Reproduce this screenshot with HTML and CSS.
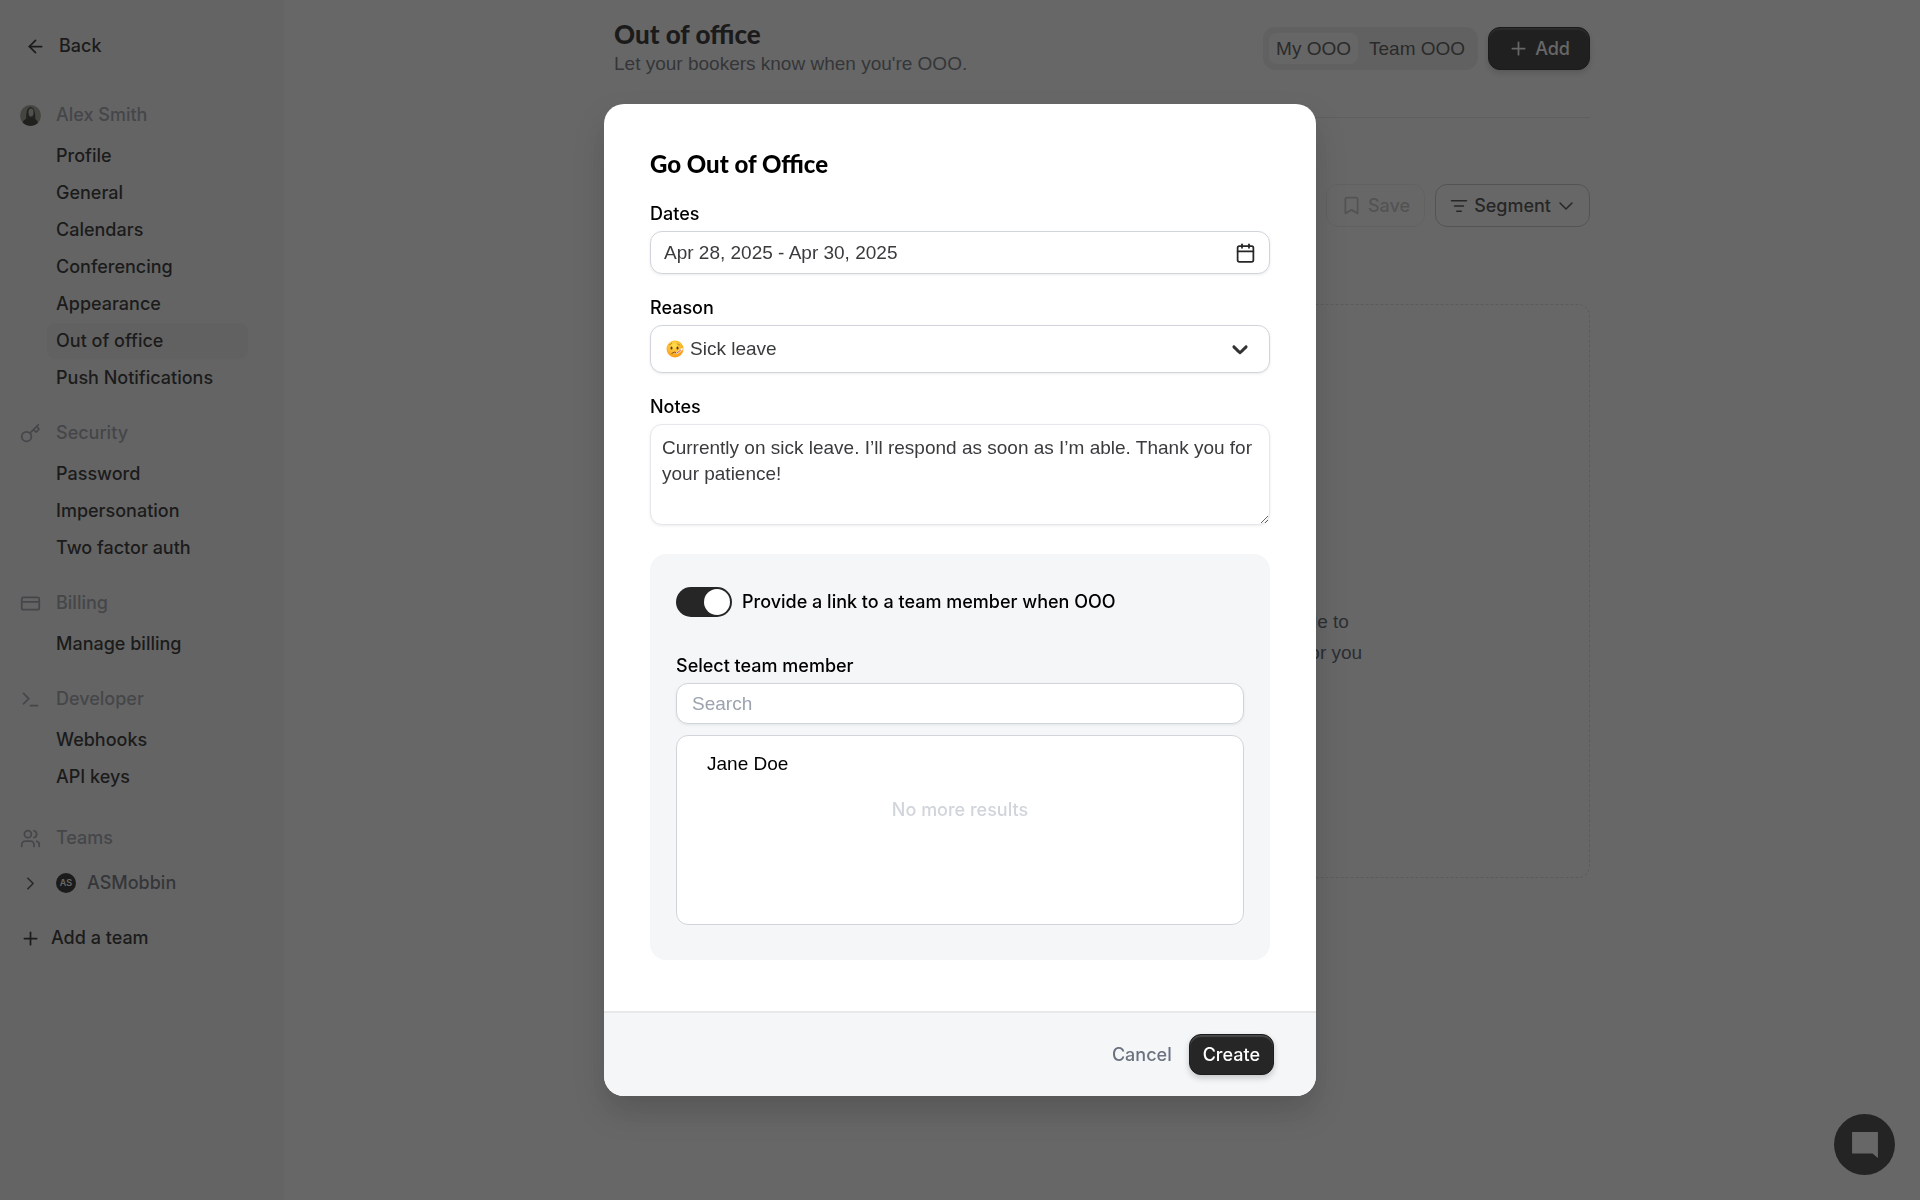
FILE: index.html
```html
<!DOCTYPE html>
<html lang="en">
<head>
    <meta charset="UTF-8">
    <meta name="viewport" content="width=device-width, initial-scale=1.0">
    <title>Out of office</title>
    <link rel="stylesheet" href="styles.css">
</head>
<body>
    <div class="app">
        <aside class="sidebar">
            <a href="#" class="back-link">
                <svg class="icon" viewBox="0 0 24 24"><path d="m12 19-7-7 7-7"/><path d="M19 12H5"/></svg>
                Back
            </a>

            <nav>
                <div class="nav-section">
                    <div class="nav-heading">
                        <svg class="avatar" viewBox="0 0 21 21">
                            <defs><clipPath id="avatarClip"><circle cx="10.5" cy="10.5" r="10.5"/></clipPath></defs>
                            <g clip-path="url(#avatarClip)">
                                <rect width="21" height="21" fill="#8d8d84"/>
                                <path d="M7 19C5 13 6 2 10.500 2S16 11 15 19Z" fill="#1c1c18"/>
                                <ellipse cx="11" cy="7.500" rx="2.500" ry="4" fill="#b9b5aa"/>
                                <path d="M2 21c0-6 4-8 8.500-8s8 2 8 8Z" fill="#12120f"/>
                            </g>
                        </svg>
                        Alex Smith
                    </div>
                    <ul class="nav-list">
                        <li><a href="#">Profile</a></li>
                        <li><a href="#">General</a></li>
                        <li><a href="#">Calendars</a></li>
                        <li><a href="#">Conferencing</a></li>
                        <li><a href="#">Appearance</a></li>
                        <li><a href="#" class="active">Out of office</a></li>
                        <li><a href="#">Push Notifications</a></li>
                    </ul>
                </div>

                <div class="nav-section">
                    <div class="nav-heading">
                        <svg class="icon" viewBox="0 0 24 24"><path d="m15.500 7.500 2.300 2.300a1 1 0 0 0 1.400 0l2.100-2.100a1 1 0 0 0 0-1.400L19 4"/><path d="m21 2-9.600 9.600"/><circle cx="7.500" cy="15.500" r="5.500"/></svg>
                        Security
                    </div>
                    <ul class="nav-list">
                        <li><a href="#">Password</a></li>
                        <li><a href="#">Impersonation</a></li>
                        <li><a href="#">Two factor auth</a></li>
                    </ul>
                </div>

                <div class="nav-section">
                    <div class="nav-heading">
                        <svg class="icon" viewBox="0 0 24 24"><rect x="2" y="5" width="20" height="14" rx="2"/><path d="M2 10h20"/></svg>
                        Billing
                    </div>
                    <ul class="nav-list">
                        <li><a href="#">Manage billing</a></li>
                    </ul>
                </div>

                <div class="nav-section">
                    <div class="nav-heading">
                        <svg class="icon" viewBox="0 0 24 24"><path d="m4 17 6-6-6-6"/><path d="M12 19h8"/></svg>
                        Developer
                    </div>
                    <ul class="nav-list">
                        <li><a href="#">Webhooks</a></li>
                        <li><a href="#">API keys</a></li>
                    </ul>
                </div>

                <div class="nav-section teams">
                    <div class="nav-heading">
                        <svg class="icon" viewBox="0 0 24 24"><path d="M16 21v-2a4 4 0 0 0-4-4H6a4 4 0 0 0-4 4v2"/><circle cx="9" cy="7" r="4"/><path d="M22 21v-2a4 4 0 0 0-3-3.870"/><path d="M16 3.130a4 4 0 0 1 0 7.750"/></svg>
                        Teams
                    </div>
                    <button type="button" class="team">
                        <svg class="icon" viewBox="0 0 24 24"><path d="m9 18 6-6-6-6"/></svg>
                        <span class="team-badge">AS</span>
                        ASMobbin
                    </button>
                </div>

                <a href="#" class="add-team">
                    <svg class="icon" viewBox="0 0 24 24"><path d="M5 12h14"/><path d="M12 5v14"/></svg>
                    Add a team
                </a>
            </nav>
        </aside>

        <main class="main">
            <div class="content">
                <header class="page-header">
                    <div class="page-title">
                        <h1>Out of office</h1>
                        <p>Let your bookers know when you're OOO.</p>
                    </div>
                    <div class="toggle-group">
                        <button type="button" class="selected">My OOO</button>
                        <button type="button">Team OOO</button>
                    </div>
                    <button type="button" class="btn btn-dark">
                        <svg class="icon" viewBox="0 0 24 24"><path d="M5 12h14"/><path d="M12 5v14"/></svg>
                        Add
                    </button>
                </header>

                <div class="toolbar">
                    <button type="button" class="btn btn-outline" disabled>
                        <svg class="icon" viewBox="0 0 24 24"><path d="m19 21-7-4-7 4V5a2 2 0 0 1 2-2h10a2 2 0 0 1 2 2z"/></svg>
                        Save
                    </button>
                    <button type="button" class="btn btn-outline">
                        <svg class="icon icon-small" viewBox="0 0 24 24"><path d="M2 5h20"/><path d="M6 12h12"/><path d="M9 19h6"/></svg>
                        Segment
                        <svg class="icon icon-small" viewBox="0 0 24 24"><path d="m4 8 8 8 8-8"/></svg>
                    </button>
                </div>

                <section class="empty-state">
                    <h2>Create an OOO</h2>
                    <p>Communicate to your bookers when you're not available to<br>take bookings. They can still book upon your return, or for you<br>can forward them to a team member.</p>
                </section>
            </div>
        </main>
    </div>

    <button type="button" class="chat-button" aria-label="Open chat">
        <svg viewBox="0 0 26 26"><path d="M1 1h24v24l-5-4H1z"/></svg>
    </button>

    <div class="overlay">
        <form class="modal" role="dialog" aria-labelledby="modalTitle">
            <div class="modal-body">
                <h2 id="modalTitle">Go Out of Office</h2>

                <div class="field">
                    <label for="dates">Dates</label>
                    <div class="control">
                        <input type="text" id="dates" value="Apr 28, 2025 - Apr 30, 2025" readonly>
                        <svg class="icon calendar" viewBox="0 0 24 24"><path d="M8 2v4"/><path d="M16 2v4"/><rect x="3" y="4" width="18" height="18" rx="2"/><path d="M3 10h18"/></svg>
                    </div>
                </div>

                <div class="field">
                    <label for="reason">Reason</label>
                    <div class="control">
                        <svg class="emoji" viewBox="0 0 36 36">
                            <defs><radialGradient id="face" cx="45%" cy="30%" r="70%"><stop offset="0" stop-color="#ffe04d"/><stop offset="1" stop-color="#f79a1a"/></radialGradient></defs>
                            <circle cx="18" cy="18" r="17" fill="url(#face)"/>
                            <path d="M6 10q4-1 6-4M22 7q2 3 6 3" fill="none" stroke="#c98a2a" stroke-width="2"/>
                            <ellipse cx="11" cy="16" rx="2" ry="3" fill="#5c3410"/>
                            <ellipse cx="23" cy="16" rx="2" ry="3" fill="#5c3410"/>
                            <path d="M11 27q6-5 12-1" fill="none" stroke="#8a4e16" stroke-width="2"/>
                            <path d="m22 26 10-8" stroke="#f4f6f8" stroke-width="4" stroke-linecap="round"/>
                            <path d="m22 26 7-5.500" stroke="#e0453a" stroke-width="2" stroke-linecap="round"/>
                        </svg>
                        <select id="reason">
                            <option>Sick leave</option>
                        </select>
                        <svg class="caret" viewBox="0 0 20 20"><path d="M4.516 7.548c.436-.446 1.043-.481 1.576 0L10 11.295l3.908-3.747c.533-.481 1.141-.446 1.574 0 .436.445.408 1.197 0 1.615-.406.418-4.695 4.502-4.695 4.502a1.095 1.095 0 0 1-1.576 0S4.924 9.581 4.516 9.163s-.436-1.170 0-1.615z"/></svg>
                    </div>
                </div>

                <div class="field">
                    <label for="notes">Notes</label>
                    <textarea id="notes">Currently on sick leave. I’ll respond as soon as I’m able. Thank you for your patience!</textarea>
                </div>

                <div class="panel">
                    <div class="switch-row">
                        <input type="checkbox" class="switch" id="provideLink" checked>
                        <label for="provideLink">Provide a link to a team member when OOO</label>
                    </div>
                    <label for="memberSearch">Select team member</label>
                    <input type="text" id="memberSearch" class="search" placeholder="Search">
                    <div class="members">
                        <button type="button" class="member">Jane Doe</button>
                        <p class="no-results">No more results</p>
                    </div>
                </div>
            </div>

            <footer class="modal-footer">
                <button type="button" class="btn btn-plain">Cancel</button>
                <button type="submit" class="btn btn-dark">Create</button>
            </footer>
        </form>
    </div>
</body>
</html>
```

FILE: styles.css
```css
* {
    box-sizing: border-box;
}

body {
    margin: 0;
    background-color: #fff;
    color: #000;
    font-family: Inter, "Liberation Sans", sans-serif;
    font-size: 18px;
    font-weight: 500;
    line-height: 24px;
}

h1, h2, p, ul {
    margin: 0;
    padding: 0;
}

h1, h2 {
    font-family: Lato, Inter, sans-serif;
    font-size: 26px;
    font-weight: 900;
    line-height: 30px;
}

a {
    color: inherit;
    text-decoration: none;
}

button, input, select, textarea {
    margin: 0;
    font: inherit;
    color: inherit;
}

button {
    padding: 0;
    border: none;
    background: none;
    cursor: pointer;
}

.icon {
    flex: none;
    width: 21px;
    height: 21px;
    fill: none;
    stroke: currentColor;
    stroke-width: 2;
    stroke-linecap: round;
    stroke-linejoin: round;
}

.icon-small {
    width: 18px;
    height: 18px;
}

/* --- Sidebar --- */
.app {
    display: flex;
    min-height: 100vh;
}

.sidebar {
    flex: none;
    width: 284px;
    padding: 28px 36px 20px 20px;
    background-color: #f5f5f5;
    color: #000;
}

.back-link,
.nav-heading,
.team,
.add-team {
    display: flex;
    align-items: center;
    height: 36px;
}

.back-link {
    gap: 13px;
    margin-bottom: 33px;
    padding-left: 5px;
}

.nav-section {
    margin-bottom: 19px;
}

.nav-heading {
    gap: 15px;
    margin-bottom: 5px;
    color: #8b919c;
}

.avatar {
    width: 21px;
    height: 21px;
}

.nav-list {
    display: flex;
    flex-direction: column;
    gap: 1px;
    margin-left: 27px;
    list-style: none;
}

.nav-list a {
    display: block;
    padding: 6px 9px;
    border-radius: 8px;
}

.nav-list .active {
    background-color: #ececec;
}

.teams {
    margin-top: 25px;
}

.teams .nav-heading {
    margin-bottom: 9px;
}

.team {
    gap: 11px;
    color: #555b66;
}

.team .icon {
    margin-right: 4px;
    color: #333;
}

.team-badge {
    width: 20px;
    height: 20px;
    border-radius: 50%;
    background-color: #000;
    color: #fff;
    font-size: 9px;
    font-weight: 600;
    line-height: 20px;
    text-align: center;
}

.add-team {
    gap: 10px;
}

/* --- Page --- */
.main {
    flex: 1;
    padding: 19px 32px;
}

.content {
    max-width: 976px;
    margin: 0 auto;
}

.page-header {
    display: flex;
    align-items: flex-start;
    gap: 10px;
    padding-bottom: 38px;
    border-bottom: 1px solid #e1e3e6;
}

.page-title {
    flex: 1;
}

.page-title p {
    color: #555b66;
    font-family: "Liberation Sans", sans-serif;
    font-size: 19px;
    font-weight: 400;
    line-height: 30px;
}

.toggle-group {
    display: flex;
    gap: 4px;
    height: 43px;
    margin-top: 8px;
    padding: 6px;
    border-radius: 12px;
    background-color: #ebebeb;
}

.toggle-group button {
    padding: 0 7px;
    border-radius: 8px;
    color: #333;
    font-family: "Liberation Sans", sans-serif;
    font-size: 19px;
    font-weight: 400;
}

.toggle-group .selected {
    background-color: #fafafa;
}

.btn {
    display: flex;
    align-items: center;
    justify-content: center;
    gap: 6px;
    height: 43px;
    border-radius: 12px;
}

.btn-dark {
    background-color: #262626;
    border: 1px solid #1c1c1c;
    color: #fff;
    box-shadow: inset 0 2px 1px rgba(255, 255, 255, 0.16), 0 3px 6px rgba(0, 0, 0, 0.2);
}

.page-header .btn {
    margin-top: 8px;
    padding: 0 19px;
    background-color: #111;
    border-color: #000;
}

.toolbar {
    display: flex;
    justify-content: flex-end;
    gap: 10px;
    margin: 66px 0 77px;
}

.btn-outline {
    padding: 0 14px;
    border: 1px solid #b9bdc4;
    color: #262626;
}

.btn-outline:disabled {
    opacity: 0.3;
}

.empty-state {
    height: 574px;
    padding-top: 247px;
    border: 1px dashed #d6d8dc;
    border-radius: 12px;
    text-align: center;
}

.empty-state p {
    margin-top: 24px;
    color: #374151;
    font-family: "Liberation Sans", sans-serif;
    font-size: 19px;
    font-weight: 400;
    line-height: 31px;
}

.chat-button {
    position: fixed;
    right: 25px;
    bottom: 25px;
    display: flex;
    align-items: center;
    justify-content: center;
    width: 61px;
    height: 61px;
    border-radius: 50%;
    background-color: #1f1f1f;
}

.chat-button svg {
    width: 28px;
    height: 28px;
    fill: #fff;
}

/* --- Modal --- */
.overlay {
    position: fixed;
    inset: 0;
    display: flex;
    align-items: center;
    justify-content: center;
    background-color: rgba(38, 38, 38, 0.7);
}

.modal {
    width: 712px;
    max-width: 100%;
    border-radius: 20px;
    background-color: #fff;
    box-shadow: 0 16px 32px rgba(0, 0, 0, 0.16);
}

.modal-body {
    padding: 45px 46px 51px;
}

.modal-body h2 {
    margin-bottom: 23px;
    font-size: 24px;
}

.modal label {
    display: block;
}

.field {
    margin-bottom: 22px;
}

.field label {
    margin-bottom: 5px;
}

.control {
    position: relative;
}

.control input,
.control select,
.field textarea,
.search {
    display: block;
    width: 100%;
    height: 43px;
    padding: 0 13px;
    border: 1px solid #d1d5db;
    border-radius: 12px;
    background-color: #fff;
    color: #3a3b3d;
    font-family: "Liberation Sans", sans-serif;
    font-size: 19px;
    font-weight: 400;
    box-shadow: 0 1px 3px rgba(0, 0, 0, 0.08);
}

.control select {
    height: 48px;
    padding-left: 39px;
    appearance: none;
}

.control .calendar,
.control .caret,
.control .emoji {
    position: absolute;
    top: 50%;
    transform: translateY(-50%);
    pointer-events: none;
}

.control .calendar {
    right: 14px;
    color: #262626;
}

.control .caret {
    right: 17px;
    width: 26px;
    height: 26px;
    fill: #333;
}

.control .emoji {
    left: 16px;
    width: 18px;
    height: 18px;
}

.field textarea {
    height: 101px;
    padding: 10px 11px;
    border-color: #e5e7eb;
    line-height: 26px;
    resize: vertical;
}

.panel {
    margin-top: 29px;
    padding: 33px 26px 35px;
    border-radius: 16px;
    background-color: #f5f6f8;
}

.switch-row {
    display: flex;
    align-items: center;
    gap: 10px;
    margin-bottom: 37px;
}

.switch {
    width: 56px;
    height: 30px;
    padding: 2px;
    border-radius: 15px;
    background-color: #262626;
    appearance: none;
    cursor: pointer;
}

.switch::before {
    content: "";
    display: block;
    width: 26px;
    height: 26px;
    border-radius: 50%;
    background-color: #fff;
}

.switch:checked::before {
    margin-left: auto;
}

.search {
    height: 41px;
    margin: 5px 0 11px;
    padding: 0 15px;
}

.search::placeholder {
    color: #9ca3af;
}

.members {
    height: 190px;
    padding: 8px;
    border: 1px solid #d1d5db;
    border-radius: 12px;
    background-color: #fff;
}

.member {
    display: block;
    width: 100%;
    height: 40px;
    padding: 0 22px;
    font-family: "Liberation Sans", sans-serif;
    font-size: 19px;
    font-weight: 400;
    text-align: left;
}

.no-results {
    padding: 14px 0;
    color: #d1d5db;
    text-align: center;
}

.modal-footer {
    display: flex;
    align-items: center;
    justify-content: flex-end;
    gap: 4px;
    height: 85px;
    padding: 0 42px;
    border-top: 2px solid #e7e8ea;
    border-radius: 0 0 20px 20px;
    background-color: #f5f6f8;
}

.modal-footer .btn {
    height: 41px;
    padding: 0 13px;
}

.btn-plain {
    color: #6b7280;
}
```
